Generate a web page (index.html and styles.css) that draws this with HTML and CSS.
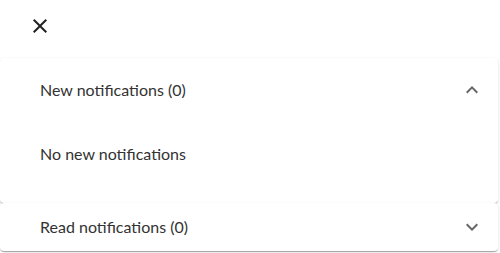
FILE: index.html
```html
<!DOCTYPE html>
<html>
<head>
<meta charset="utf-8">
<link rel="stylesheet" href="styles.css">
</head>
<body>
<div class="panel">
  <div class="header">
    <button class="close" aria-label="Close">
      <svg viewBox="0 0 24 24" width="24" height="24"><path d="M19 6.41 17.59 5 12 10.59 6.41 5 5 6.41 10.59 12 5 17.59 6.41 19 12 13.41 17.59 19 19 17.59 13.41 12z"/></svg>
    </button>
  </div>
  <div class="accordion expanded">
    <div class="summary">
      <span class="title">New notifications (0)</span>
      <svg class="chev" viewBox="0 0 24 24" width="24" height="24"><path d="M12 8l-6 6 1.41 1.41L12 10.83l4.59 4.58L18 14z"/></svg>
    </div>
    <div class="details">No new notifications</div>
  </div>
  <div class="accordion">
    <div class="summary compact">
      <span class="title">Read notifications (0)</span>
      <svg class="chev" viewBox="0 0 24 24" width="24" height="24"><path d="M16.59 8.59 12 13.17 7.41 8.59 6 10l6 6 6-6z"/></svg>
    </div>
  </div>
</div>
</body>
</html>
```

FILE: styles.css
```css
html, body {
  margin: 0;
  padding: 0;
  background: #ffffff;
}
body {
  font-family: "Lato", "Liberation Sans", sans-serif;
  font-size: 16px;
  color: #333333;
  width: 500px;
  height: 253px;
  overflow: hidden;
}
.panel {
  display: flex;
  flex-direction: column;
}
.header {
  height: 58px;
  display: flex;
  align-items: flex-start;
  padding-left: 20px;
  box-sizing: border-box;
  padding-top: 6px;
}
.close {
  width: 40px;
  height: 40px;
  padding: 8px;
  border: none;
  background: transparent;
  display: flex;
  align-items: center;
  justify-content: center;
}
.close svg {
  fill: #212121;
}
.accordion {
  margin-right: 2px;
  background: #ffffff;
  border-radius: 4px;
  box-shadow: 0 2px 1px -1px rgba(0,0,0,0.2), 0 1px 1px 0 rgba(0,0,0,0.14), 0 1px 3px 0 rgba(0,0,0,0.12);
}
.summary {
  height: 64px;
  display: flex;
  align-items: center;
  justify-content: space-between;
  padding: 0 14px 0 40px;
}
.summary.compact {
  height: 48px;
}
.title {
  line-height: 24px;
}
.chev {
  fill: #666666;
  flex: none;
}
.details {
  padding: 20px 40px 37px;
  line-height: 24px;
}
```
